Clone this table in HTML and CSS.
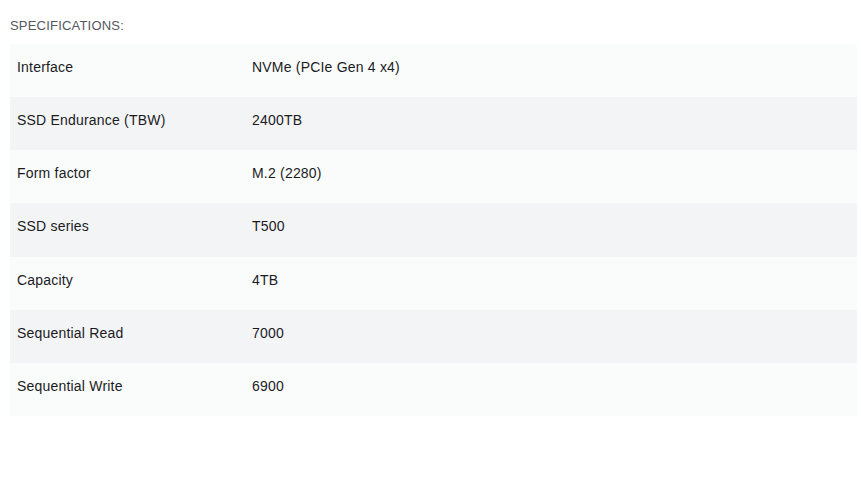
FILE: index.html
```html
<!DOCTYPE html>
<html>
<head>
<meta charset="utf-8">
<link rel="stylesheet" href="styles.css">
</head>
<body>
<div class="specs">
  <h2 class="specs-title">SPECIFICATIONS:</h2>
  <table class="specs-table">
    <tbody>
      <tr><td class="label">Interface</td><td class="value">NVMe (PCIe Gen 4 x4)</td></tr>
      <tr><td class="label">SSD Endurance (TBW)</td><td class="value">2400TB</td></tr>
      <tr><td class="label">Form factor</td><td class="value">M.2 (2280)</td></tr>
      <tr><td class="label">SSD series</td><td class="value">T500</td></tr>
      <tr><td class="label">Capacity</td><td class="value">4TB</td></tr>
      <tr><td class="label">Sequential Read</td><td class="value">7000</td></tr>
      <tr><td class="label">Sequential Write</td><td class="value">6900</td></tr>
    </tbody>
  </table>
</div>
</body>
</html>
```

FILE: styles.css
```css
html, body {
  margin: 0;
  padding: 0;
  background: #ffffff;
}
body {
  font-family: "Liberation Sans", Arial, sans-serif;
  color: #1b1b1f;
}
.specs {
  padding: 16px 4px 0 10px;
}
.specs-title {
  margin: 0 0 9px 0;
  font-size: 13px;
  font-weight: 400;
  line-height: 19px;
  color: #54575e;
  letter-spacing: 0.2px;
}
.specs-table {
  width: 847px;
  border-collapse: collapse;
  font-size: 14px;
  letter-spacing: 0.2px;
}
.specs-table tr:nth-child(odd) {
  background: #fafbfb;
}
.specs-table tr:nth-child(even) {
  background: #f3f4f5;
}
.specs-table td {
  height: 53.15px;
  padding: 0 7px 7px 7px;
  box-sizing: border-box;
  vertical-align: middle;
  line-height: 20px;
}
.specs-table td.label {
  width: 235px;
}
```
